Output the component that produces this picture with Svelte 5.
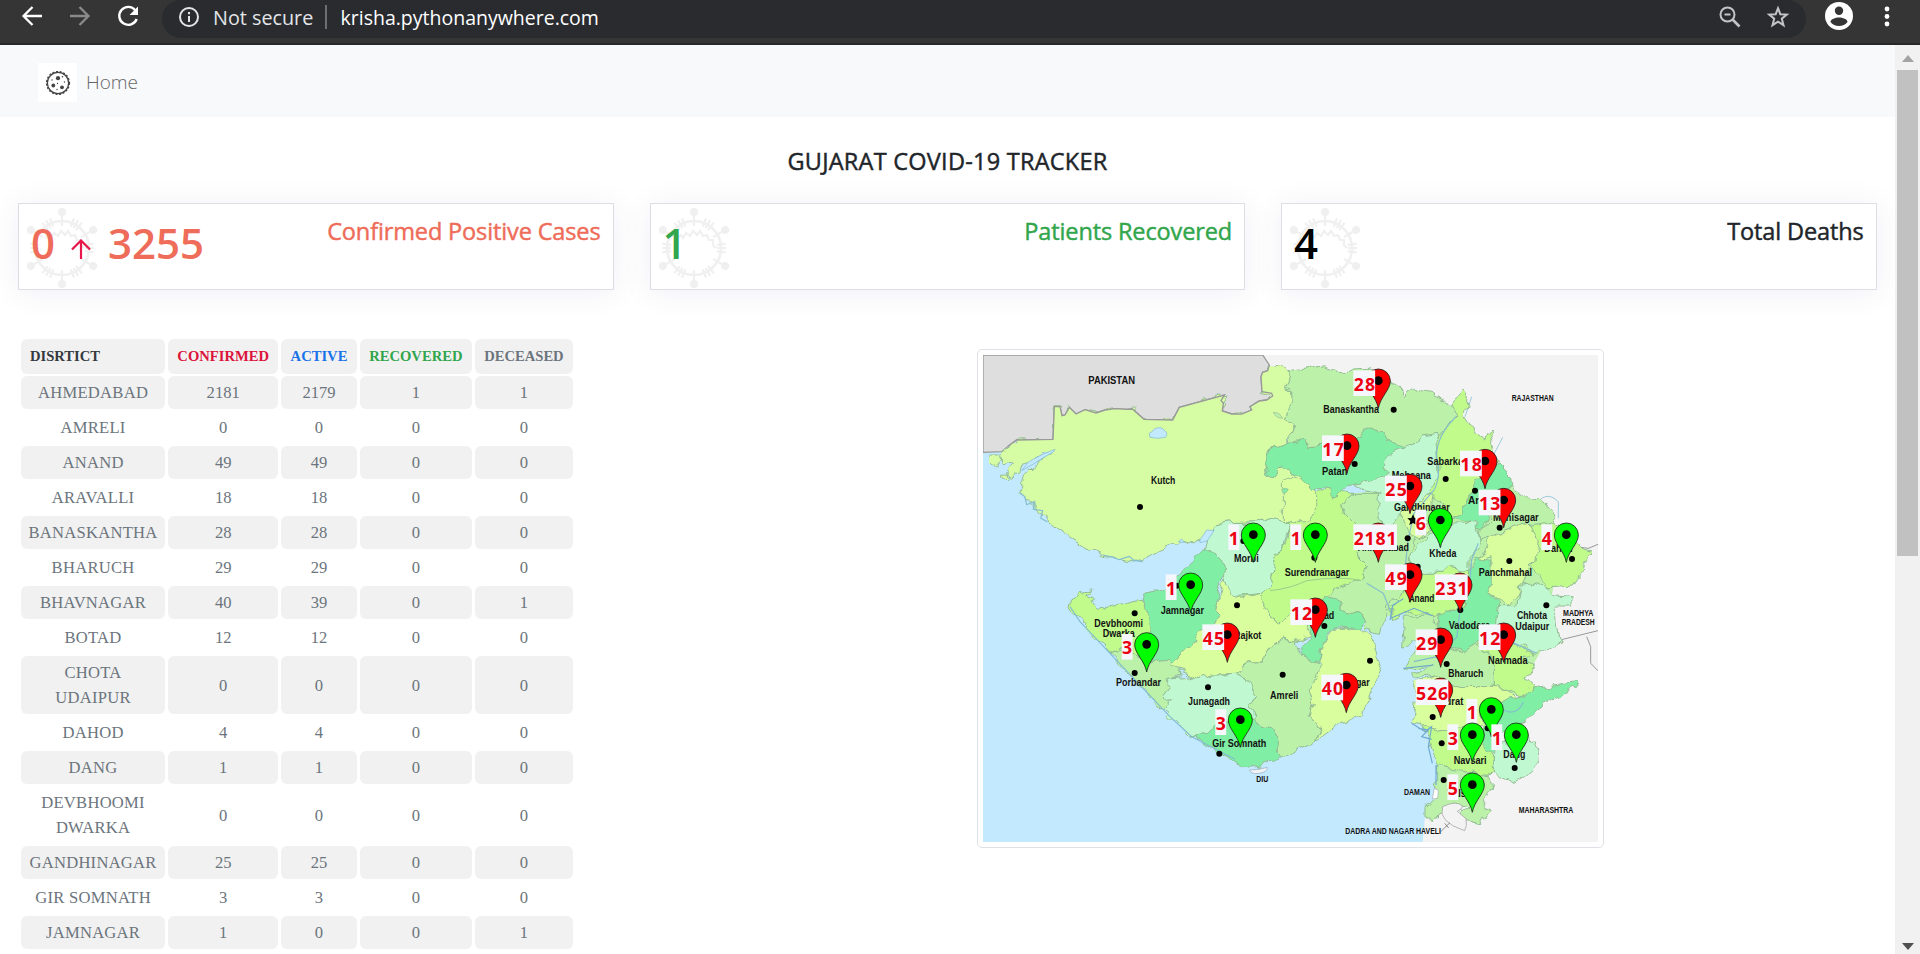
<script>
  const stats = [
    { tone: 'orange', value: '0', rise: '3255', label: 'Confirmed Positive Cases' },
    { tone: 'green', value: '1', label: 'Patients Recovered' },
    { tone: 'black', value: '4', label: 'Total Deaths' }
  ];

  const rows = [
    ['AHMEDABAD', 2181, 2179, 1, 1],
    ['AMRELI', 0, 0, 0, 0],
    ['ANAND', 49, 49, 0, 0],
    ['ARAVALLI', 18, 18, 0, 0],
    ['BANASKANTHA', 28, 28, 0, 0],
    ['BHARUCH', 29, 29, 0, 0],
    ['BHAVNAGAR', 40, 39, 0, 1],
    ['BOTAD', 12, 12, 0, 0],
    ['CHOTA UDAIPUR', 0, 0, 0, 0],
    ['DAHOD', 4, 4, 0, 0],
    ['DANG', 1, 1, 0, 0],
    ['DEVBHOOMI DWARKA', 0, 0, 0, 0],
    ['GANDHINAGAR', 25, 25, 0, 0],
    ['GIR SOMNATH', 3, 3, 0, 0],
    ['JAMNAGAR', 1, 0, 0, 1]
  ];

  // District fills and outlines, in map units (three per pixel).
  const lime = '#d6fda4', sage = '#bbf1a8', mint = '#c0f8d2', jade = '#80eea4', leaf = '#c0fb8c', lemon = '#d9fe9e';
  const districts = [
    [lime, '253,200 270,200 276,227 285,225 298,202 318,222 345,209 378,219 405,210 435,206 470,208 487,207 522,238 608,240 628,202 763,165 753,182 760,190 757,213 785,222 815,222 845,210 840,200 868,183 890,180 908,168 905,160 876,155 873,110 878,97 893,92 898,75 930,78 950,95 962,100 945,140 968,150 970,190 955,210 950,240 972,250 955,285 950,312 890,335 885,370 895,410 915,400 920,378 940,375 965,400 990,410 1030,440 1035,490 1030,520 990,548 955,545 905,535 870,545 780,548 740,555 730,570 715,590 690,605 640,605 600,615 545,640 515,665 490,660 450,655 400,645 360,630 310,600 250,560 215,530 195,505 165,475 150,460 155,440 165,400 200,370 255,330 215,340 180,365 155,370 150,395 130,415 115,415 115,400 130,375 100,370 95,350 110,325 140,300 249,298'],
    [lime, '60,345 90,345 95,360 75,380 58,372'],
    [lime, '88,400 110,398 110,412 90,415'],
    [sage, '1115,490 1150,460 1225,460 1240,520 1290,500 1340,560 1320,650 1330,700 1310,740 1290,780 1260,770 1255,810 1235,840 1225,880 1180,870 1190,850 1180,825 1110,815 1110,780 1060,770 1100,740 1180,700'],
    [mint, '730,570 740,555 780,548 870,545 905,535 955,545 960,560 945,600 940,635 905,645 910,680 905,710 900,740 870,760 820,765 790,775 770,740 762,700 755,665 705,620'],
    [jade, '705,620 755,665 762,705 745,750 740,770 735,810 750,825 740,845 690,880 655,915 620,960 600,980 595,955 550,970 540,940 535,900 545,860 530,810 520,760 580,750 600,735 640,700 670,670 680,645'],
    [leaf, '370,752 330,758 305,780 300,800 330,845 420,940 440,930 520,955 545,960 535,900 545,860 530,810 520,780 490,785 470,790 430,795 400,812 375,810 362,790 370,775 350,765'],
    [sage, '420,940 455,925 500,945 550,970 595,955 615,985 640,1005 590,1015 600,1035 580,1060 600,1085 590,1115 575,1110 500,1025 460,980'],
    [lemon, '620,960 655,915 690,880 740,845 750,825 735,810 745,770 765,720 775,750 800,775 870,760 890,800 920,850 960,820 1000,830 1020,890 985,900 940,895 885,935 880,965 820,975 800,1000 720,1003 670,1025 650,1000 600,980'],
    [mint, '590,1015 650,1010 670,1025 720,1003 800,1000 845,1040 860,1070 835,1095 850,1120 850,1140 735,1150 715,1180 665,1190 600,1130 575,1110 600,1085 580,1060 600,1035'],
    [jade, '665,1190 715,1180 735,1148 850,1140 905,1160 935,1245 915,1265 840,1285 790,1265 720,1225'],
    [sage, '820,975 880,965 885,935 940,895 985,900 995,950 1050,970 1040,1010 1015,1050 1030,1090 1020,1130 1050,1170 1035,1205 960,1240 935,1250 905,1160 850,1140 850,1120 835,1095 860,1070 845,1040 800,1000'],
    [leaf, '955,545 990,548 1030,520 1035,455 1080,450 1150,460 1115,490 1120,520 1170,570 1160,650 1190,680 1180,720 1110,740 1060,770 1030,840 960,820 920,850 890,800 870,760 900,740 910,680 905,645 940,635 960,560'],
    [jade, '1060,770 1110,780 1110,815 1180,825 1190,850 1160,865 1095,860 1070,890 1050,930 1035,970 1000,950 995,920 1020,890 1030,840'],
    [lemon, '1095,865 1160,865 1200,885 1220,940 1235,990 1210,1040 1185,1100 1180,1125 1110,1150 1035,1205 1050,1170 1020,1130 1030,1090 1015,1050 1040,1010 1050,970 1040,960 1055,920 1075,890'],
    [lemon, '960,408 1010,425 1040,445 1040,500 1015,540 985,548 940,540 940,420'],
    [sage, '962,97 1030,85 1060,80 1110,95 1135,88 1190,85 1225,90 1260,120 1290,140 1305,170 1330,148 1390,165 1440,190 1458,225 1410,290 1400,310 1395,282 1355,285 1345,305 1300,320 1250,300 1230,265 1195,265 1160,300 1090,310 1020,325 1010,300 960,315 955,285 972,250 950,240 955,210 970,190 968,150 945,140'],
    [jade, '950,312 1010,300 1020,325 1090,310 1160,300 1195,265 1230,265 1250,300 1300,320 1250,345 1240,370 1255,400 1200,420 1150,430 1110,455 1095,472 1080,450 1020,440 990,410 965,400 940,375 920,378 915,400 895,410 885,370 890,335'],
    [mint, '1300,320 1345,305 1355,285 1400,280 1410,300 1400,320 1405,400 1390,450 1360,480 1340,510 1290,520 1260,570 1225,540 1220,500 1230,460 1190,450 1150,430 1200,420 1255,400 1240,370 1250,345'],
    [leaf, '1410,290 1458,225 1445,190 1480,150 1495,170 1485,230 1520,285 1550,300 1560,270 1572,300 1565,330 1590,370 1560,380 1510,430 1480,520 1440,525 1420,500 1380,470 1405,400 1400,320'],
    [jade, '1510,430 1560,385 1590,375 1625,410 1628,440 1560,470 1570,510 1550,540 1530,572 1500,550 1445,530 1480,520'],
    [sage, '1628,440 1660,470 1700,480 1740,510 1760,545 1750,580 1680,560 1640,555 1560,590 1525,610 1530,572 1560,540 1570,510 1560,470'],
    [leaf, '1760,545 1800,570 1815,600 1830,625 1865,635 1840,690 1810,735 1740,740 1700,700 1680,670 1675,560'],
    [lemon, '1560,590 1640,555 1680,560 1705,600 1695,660 1675,680 1650,740 1640,770 1620,800 1560,760 1560,650 1530,660'],
    [lemon, '1290,520 1340,490 1390,460 1385,500 1360,530 1390,570 1340,600 1310,570'],
    [mint, '1320,640 1360,600 1410,560 1440,550 1520,555 1530,610 1500,660 1500,690 1440,680 1420,700 1360,700 1330,690'],
    [leaf, '1310,740 1330,700 1360,700 1420,700 1440,680 1500,690 1490,760 1475,800 1410,820 1390,830 1330,815 1260,840 1265,800 1290,780'],
    [jade, '1500,690 1520,655 1555,660 1560,700 1560,760 1585,785 1590,840 1560,880 1520,910 1490,930 1420,915 1420,890 1400,860 1410,820 1480,800 1490,750'],
    [mint, '1650,735 1700,730 1735,740 1750,770 1800,775 1800,795 1750,795 1760,830 1770,910 1700,940 1660,920 1600,900 1580,850 1585,800 1640,800'],
    [sage, '1300,835 1390,825 1400,860 1420,890 1420,915 1480,935 1520,910 1570,950 1570,1040 1460,1040 1390,1005 1330,1015 1325,1000 1390,980 1300,985 1335,930 1360,905 1295,915'],
    [leaf, '1520,920 1600,890 1660,930 1695,940 1665,950 1695,1000 1660,1010 1700,1050 1650,1070 1570,1040 1570,950'],
    [lemon, '1330,1030 1390,1005 1460,1040 1580,1040 1640,1075 1600,1100 1560,1150 1520,1160 1400,1170 1330,1150 1340,1080'],
    [jade, '1530,1100 1640,1075 1710,1040 1820,1025 1825,1040 1760,1070 1700,1110 1660,1150 1600,1170 1570,1240 1530,1240 1540,1150'],
    [leaf, '1350,1155 1400,1170 1520,1160 1550,1230 1570,1245 1570,1300 1520,1305 1460,1290 1400,1270 1380,1200'],
    [mint, '1575,1230 1610,1210 1680,1190 1700,1230 1705,1270 1660,1310 1630,1328 1570,1300'],
    [sage, '1400,1270 1460,1290 1560,1305 1565,1340 1540,1390 1555,1410 1520,1455 1470,1440 1475,1415 1500,1405 1460,1395 1410,1415 1390,1440 1365,1440 1365,1400 1400,1370 1400,1330']
  ];

  // text, left, baseline, width, size
  const labels = [
    ['PAKISTAN', 355, 131, 140, 34],
    ['Kutch', 543, 433, 73, 31],
    ['RAJASTHAN', 1625, 183, 126, 27],
    ['Banaskantha', 1060, 218, 167, 31],
    ['Patan', 1056, 404, 76, 31],
    ['Sabarkantha', 1372, 375, 165, 31],
    ['Mehsana', 1265, 417, 118, 31],
    ['Aravalli', 1494, 492, 110, 31],
    ['Gandhinagar', 1272, 513, 167, 31],
    ['Mahisagar', 1569, 542, 137, 31],
    ['Dahod', 1723, 635, 85, 31],
    ['Ahmedabad', 1163, 632, 154, 31],
    ['Kheda', 1378, 652, 81, 31],
    ['Morbi', 792, 667, 74, 31],
    ['Surendranagar', 944, 707, 194, 31],
    ['Panchmahal', 1526, 707, 160, 31],
    ['Anand', 1316, 785, 77, 31],
    ['Jamnagar', 572, 821, 130, 31],
    ['Devbhoomi', 373, 860, 146, 31],
    ['Dwarka', 398, 892, 96, 31],
    ['Rajkot', 792, 898, 82, 31],
    ['Botad', 1017, 836, 76, 31],
    ['Porbandar', 438, 1037, 135, 31],
    ['Junagadh', 654, 1096, 126, 31],
    ['Amreli', 900, 1076, 85, 31],
    ['Bhavnagar', 1062, 1037, 137, 31],
    ['Gir Somnath', 727, 1222, 162, 31],
    ['DIU', 859, 1326, 36, 27],
    ['Vadodara', 1436, 866, 124, 31],
    ['Chhota', 1641, 837, 90, 31],
    ['Udaipur', 1636, 871, 102, 31],
    ['MADHYA', 1779, 829, 91, 27],
    ['PRADESH', 1775, 854, 99, 27],
    ['Narmada', 1554, 971, 119, 31],
    ['Bharuch', 1435, 1010, 105, 31],
    ['Surat', 1408, 1096, 72, 31],
    ['Navsari', 1451, 1272, 99, 31],
    ['Dang', 1600, 1254, 66, 31],
    ['Valsad', 1432, 1370, 88, 31],
    ['DAMAN', 1302, 1364, 78, 27],
    ['MAHARASHTRA', 1646, 1418, 164, 27],
    ['DADRA AND NAGAR HAVELI', 1126, 1481, 287, 27]
  ];

  const towns = [[510, 501], [1271, 209], [1154, 372], [1427, 417], [1515, 452], [1589, 563], [1313, 595], [1618, 663], [1806, 657], [1343, 680], [820, 603], [1033, 653], [620, 737], [494, 820], [801, 796], [1063, 858], [494, 999], [714, 1042], [938, 1004], [748, 1241], [1200, 962], [1471, 810], [1729, 796], [1430, 972], [1388, 1131], [1553, 1165], [1415, 1210], [1634, 1284], [1421, 1320]];

  // value, centre x, top y, colour
  const R = '#fe0000', G = '#00fe00';
  const pins = [
    [28, 1225, 87, R], [17, 1131, 282, R], [18, 1545, 328, R], [25, 1320, 403, R], [13, 1601, 445, R],
    [6, 1411, 505, G], [1, 850, 549, G], [1, 1036, 549, G], [2181, 1225, 549, R], [4, 1789, 549, G],
    [49, 1320, 669, R], [231, 1470, 699, R], [1, 662, 699, G], [12, 1036, 774, R], [45, 772, 849, R],
    [3, 530, 878, G], [29, 1412, 864, R], [12, 1601, 849, R], [40, 1129, 1000, R], [526, 1412, 1014, R],
    [1, 1564, 1073, G], [3, 1507, 1149, G], [1, 1639, 1149, G], [5, 1507, 1299, G], [3, 811, 1104, G]
  ];

  const spikes = [0, 60, 120, 180, 240, 300];
  const bristles = [22, 30, 38, 82, 90, 98, 142, 150, 158, 202, 210, 218, 262, 270, 278, 322, 330, 338];
</script>

<div class="window">
  <header class="chrome">
    <div class="tools">
      <svg width="24" height="24" viewBox="0 0 24 24" fill="none" stroke="#fff" stroke-width="2.3"><path d="M22 12H4M12.5 3 3.5 12l9 9" /></svg>
      <svg width="24" height="24" viewBox="0 0 24 24" fill="none" stroke="#8a8a8a" stroke-width="2.3"><path d="M2 12h18M11.5 3l9 9-9 9" /></svg>
      <svg width="24" height="24" viewBox="0 0 24 24"><path d="M19.3 6.2A9 9 0 1 0 20.700 15" fill="none" stroke="#fff" stroke-width="2.400" /><path d="M22 2.500V11h-8.500z" fill="#fff" /></svg>
    </div>
    <div class="omnibox">
      <svg width="22" height="22" viewBox="0 0 22 22" fill="none" stroke="#e3e5e8" stroke-width="2"><circle cx="11" cy="11" r="9" /><path d="M11 10v6M11 6v2.200" /></svg>
      <span class="secure">Not secure</span>
      <span class="bar"></span>
      <span class="url">krisha.pythonanywhere.com</span>
      <svg class="lens" width="24" height="24" viewBox="0 0 24 24" fill="none" stroke="#c3c4c6" stroke-width="2"><circle cx="9.500" cy="9.500" r="7" /><path d="M6.500 9.500h6" /><path d="m14.500 14.500 7 7" stroke-width="2.700" /></svg>
      <svg width="24" height="24" viewBox="0 0 24 24" fill="none" stroke="#c3c4c6" stroke-width="2"><path d="m12 3.200 2.300 6 6.500.400-5 4.100 1.700 6.500-5.500-3.600-5.500 3.600 1.700-6.500-5-4.100 6.500-.400z" /></svg>
    </div>
    <svg class="avatar" width="28" height="28" viewBox="0 0 28 28"><circle cx="14" cy="14" r="14" fill="#fff" /><circle cx="14" cy="8.800" r="4.200" fill="#353535" /><path d="M5.500 20c0-3 5-4.500 8.500-4.500s8.500 1.500 8.500 4.500c-2 2.500-5 4-8.500 4s-6.500-1.500-8.500-4z" fill="#353535" /></svg>
    <svg class="dots" width="6" height="22" viewBox="0 0 6 22" fill="#fff"><circle cx="3" cy="3" r="2.400" /><circle cx="3" cy="10.500" r="2.400" /><circle cx="3" cy="18" r="2.400" /></svg>
  </header>

  <div class="body">
    <main>
      <nav>
        <span class="logo">
          <svg width="26" height="26" viewBox="0 0 26 26"><circle cx="13" cy="13" r="10.600" fill="none" stroke="#444" stroke-width="1.200" /><circle cx="13" cy="13" r="11.500" fill="none" stroke="#444" stroke-width="1.200" stroke-dasharray="2 1.700" /><g fill="#444"><circle cx="13" cy="8.200" r="2.100" /><circle cx="8.300" cy="15.500" r="1.900" /><circle cx="17" cy="17.300" r="1.900" /><circle cx="17.500" cy="6.700" r=".8" /><circle cx="19.500" cy="12" r=".7" /><circle cx="12.500" cy="13.500" r=".7" /><circle cx="12" cy="19.500" r=".7" /><circle cx="7" cy="10" r=".7" /></g></svg>
        </span>
        <a href="#home">Home</a>
      </nav>
      <h1>GUJARAT COVID-19 TRACKER</h1>

      <section class="stats">
        {#each stats as s}
          <div class="card {s.tone}">
            <svg class="virus" width="72" height="82" viewBox="-36 -41 72 82" fill="none" stroke="#f0f0f0" stroke-width="2.200">
              <circle r="27" stroke-width="2.600" />
              {#each spikes as a}
                <g transform="rotate({a})"><path d="M0-22v14" transform="translate(0 -14)" /><circle cy="-36" r="4" fill="#f0f0f0" stroke="none" /></g>
              {/each}
              {#each bristles as a}
                <path transform="rotate({a})" d="M0-23v-9" />
              {/each}
              <path d="M-17-10l4-3 2 3 3-5 4 3 3-5 4 4 3-4 3 5 4-1 2 5 4 0 0 5 3 3" />
            </svg>
            <div class="figure">
              <span>{s.value}</span>
              {#if s.rise}
                <svg width="20" height="20" viewBox="0 0 20 20" fill="none" stroke="#e8174b" stroke-width="2.200"><path d="M10 20V2M1 10.500l9-9 9 9" /></svg>
                <span>{s.rise}</span>
              {/if}
            </div>
            <h2>{s.label}</h2>
          </div>
        {/each}
      </section>

      <section class="content">
        <table>
          <colgroup><col class="c1" /><col class="c2" /><col class="c3" /><col class="c4" /><col class="c5" /></colgroup>
          <thead>
            <tr><th class="dark">DISRTICT</th><th class="red">CONFIRMED</th><th class="blue">ACTIVE</th><th class="grn">RECOVERED</th><th>DECEASED</th></tr>
          </thead>
          <tbody>
            {#each rows as r}
              <tr>{#each r as v}<td>{v}</td>{/each}</tr>
            {/each}
          </tbody>
        </table>

        <div class="map">
          <svg width="615" height="487" viewBox="39 45 1845 1461">
            <defs>
              <filter id="rough" x="0" y="0" width="100%" height="100%">
                <feTurbulence type="fractalNoise" baseFrequency="0.028" numOctaves="2" seed="4" result="n" />
                <feDisplacementMap in="SourceGraphic" in2="n" scale="34" xChannelSelector="R" yChannelSelector="G" />
              </filter>
            </defs>
            <rect x="39" y="45" width="1845" height="1461" fill="#c3e9fe" />
            <polygon points="870,45 1884,45 1884,1506 1358,1506 1365,1430 1420,1350 1420,900 1200,400 900,200" fill="#f3f3f3" />
            <polygon class="edge" points="39,45 878,45 898,75 893,92 878,97 873,110 876,155 905,160 908,168 890,180 868,183 840,200 845,210 815,222 785,222 757,213 760,190 753,182 763,165 628,202 608,240 522,238 487,207 470,208 435,206 405,210 378,219 345,209 318,222 298,202 285,225 276,227 270,200 253,200 249,298 140,300 115,318 95,335 39,337" fill="#dedede" />
            <g fill="none" stroke="#9ccbdd" stroke-width="3">
              <path d="M1485 230 1505 170M1560 365 1598 292M1690 505q35-60 75-20v50" />
              <path d="M1770 900 1884 872M1850 890l12 30v50l22 22" stroke="#999" />
              <path d="M1815 620l40 5 29-12" stroke="#999" />
            </g>
            <polygon points="1150,460 1600,420 1800,600 1750,740 1720,920 1640,1060 1430,1200 1400,1000 1440,880 1300,820 1060,860 980,900 760,1000 600,960 780,760 1000,560" fill={sage} />
            <g filter="url(#rough)" class="areas">
              {#each districts as d}
                <polygon points={d[1]} fill={d[0]} />
              {/each}
            </g>
            <polygon points="140,300 249,298 253,200 270,200 276,227 285,225 298,202 318,222 345,209 378,219 405,210 435,206 470,208 487,207 522,238 608,240 628,202 763,165 753,182 760,190 757,213 785,222 815,222 845,210 840,200 868,183 890,180 908,168 905,160 876,155 873,110 878,97 893,92 898,77 925,83 938,105 925,150 935,200 930,280 860,330 500,400 270,345 200,330 150,325" fill={lime} />
            <polyline points="898,75 893,92 878,97 873,110 876,155 905,160 908,168 890,180 868,183 840,200 845,210 815,222 785,222 757,213 760,190 753,182 763,165 628,202 608,240 522,238 487,207 470,208 435,206 405,210 378,219 345,209 318,222 298,202 285,225 276,227 270,200 253,200 249,298 140,300 115,318" fill="none" stroke="#999" stroke-width="4" />
            <g fill="#c3e9fe" stroke="#7fb7cf" stroke-width="2">
              <path d="M538 280q12-6 14-12 20-12 32 4 12 8 2 20-22 6-46 0z" />
              <path d="M155 392 175 366 215 344 255 328 250 336 218 354 190 372z" />
              <path d="M690 600l20-30 22 2-20 30-22 6zM625 605l10-8 8 10z" />
            </g>
            <path d="M935 448q12-6 20 0-4 12-16 12z" fill={jade} stroke="#9b9" stroke-width="2" />
            <path d="M910 217q20 0 28 18-20 0-28-18z" fill={sage} stroke="#9b9" stroke-width="2" />
            <g fill="none" stroke="#83bdd0" stroke-width="3.500">
              <path d="M1458 230q-60 60-58 120 14 60-8 100l-60 70-18 80-8 80M1525 610l-20 50-8 90-26 50-10 90-60 60-70 15M1190 730l50 30 20 50M1600 1110q40 20 60-24M1700 940l-110-50" />
              <path d="M900 752q60-6 110-30 90-14 160-2" stroke="#97cf8e" stroke-width="3" />
              <path d="M1260 840l8-44 32-20M1262 835l70-30 55 22M1300 985l90-10M1325 1150l40 25 20-15-10 60 12 50M1345 1165l30 5-20 20 30 8M1398 1275v60" stroke="#6ea9cf" />
              <path d="M150 458l14 12 6 24 24-10-4 24 28 4-6 22 20 12M398 645l30 6 20 8 30-10 14 12 26 4" />
              <path d="M300 800l30 45 90 95 80 85 100 105 65 60 70 36 60 32" />
            </g>
            <path d="M1418 1400q40-20 60-2-2 10-16 16 14 12 26 22 4 22-4 36l-34-14-22-16-12-20z" fill="#f3f3f3" stroke="#999" stroke-width="2" />
            <path d="M1393 1345l12 6-2 24-16 2z" fill="#fff" stroke="#aaa" stroke-width="2" />
            <path d="M838 1290q30 0 54-8 0 16-26 18-22 4-28-10z" fill="#f3f3f3" stroke="#a9c0d8" stroke-width="3" />
            <path d="M1412 1475 1440 1448M1424 1450l12 14" stroke="#777" stroke-width="2.500" />

            {#each towns as t}<circle cx={t[0]} cy={t[1]} r="9" />{/each}
            <path d="M1329 523l5 11 12 1-9 8 3 12-11-6-11 6 3-12-9-8 12-1z" />
            <g class="labels">
              {#each labels as l}
                <text x={l[1]} y={l[2]} font-size={l[4]} textLength={l[3]} lengthAdjust="spacingAndGlyphs">{l[0]}</text>
              {/each}
            </g>
            {#each pins as p}
              <g transform="translate({p[1]} {p[2]})">
                <path d="M0 118C-6 84-36 62-36 36A36 36 0 0 1 36 36C36 62 6 84 0 118z" fill={p[3]} stroke="#222" stroke-width="2.500" />
                <circle cy="35" r="13" fill="#000" />
                <rect x="-75" y="4" width={32.7 * String(p[0]).length} height="77" fill="#f5f7fc" />
                <text class="count" x="-74" y="65" textLength={32.2 * String(p[0]).length}>{p[0]}</text>
              </g>
            {/each}
          </svg>
        </div>
      </section>
    </main>
    <aside class="scroll">
      <svg width="12" height="7" viewBox="0 0 12 7"><path d="M6 0l6 7H0z" fill="#a3a3a3" /></svg>
      <div class="thumb"></div>
      <svg class="down" width="12" height="7" viewBox="0 0 12 7"><path d="M6 7 12 0H0z" fill="#505050" /></svg>
    </aside>
  </div>
</div>

<style>
  :global(body) { margin: 0; background: #fff; }
  .window { height: 954px; overflow: hidden; display: flex; flex-direction: column; font-family: 'Open Sans', 'Noto Sans', sans-serif; }
  svg { display: block; flex: none; }

  .chrome { flex: none; height: 45px; box-sizing: border-box; background: #353535; border-bottom: 2px solid #282828; display: flex; align-items: flex-start; }
  .tools { display: flex; gap: 24px; padding: 4px 0 0 20px; width: 142px; }
  .omnibox { width: 1644px; height: 38px; box-sizing: border-box; background: #292b2f; display: flex; align-items: center; padding: 0 16px 4px; border-radius: 19px; }
  .secure { margin-left: 13px; width: 104px; color: #e3e5e8; font-size: 19.800px; white-space: nowrap; }
  .bar { margin-left: 8px; width: 1.500px; height: 24px; background: #6c6e71; }
  .url { margin-left: 14px; color: #fff; font-size: 19.5px; white-space: nowrap; }
  .lens { margin-left: auto; margin-right: 24px; }
  .avatar { margin: 2px 0 0 19px; }
  .dots { margin: 6px 0 0 31px; }

  .body { flex: 1; min-height: 0; display: flex; }
  main { width: 1895px; height: 909px; overflow: hidden; }
  nav { height: 72px; background: #f8f9fb; display: flex; align-items: center; padding: 3px 0 0 38px; box-sizing: border-box; }
  .logo { width: 39px; height: 39px; background: #fff; display: flex; align-items: center; justify-content: center; }
  nav a { margin-left: 9px; margin-top: -2px; font-size: 19px; font-weight: 300; color: #666; text-decoration: none; }
  h1 { margin: 27px 0 0; height: 59px; line-height: 34px; font-size: 23.5px; font-weight: 400; letter-spacing: 0.250px; color: #212529; text-align: center; -webkit-text-stroke: 0.450px; }

  .stats { display: flex; gap: 36px; padding-left: 18px; }
  .card { width: 595.500px; height: 87px; box-sizing: border-box; flex: none; border: 1px solid #dcdfe3; box-shadow: 0 3px 28px rgba(60, 60, 130, 0.08); background: #fff; position: relative; display: flex; justify-content: space-between; }
  .virus { position: absolute; left: 7px; top: 3px; }
  .figure { position: relative; display: flex; align-items: center; height: 77px; margin-left: 12px; font-size: 42px; font-weight: 600; }
  .figure svg { margin: 12px 17px 0 16px; }
  h2 { margin: 10px 12px 0 0; line-height: 34px; font-size: 23.500px; font-weight: 400; letter-spacing: -0.130px; white-space: nowrap; -webkit-text-stroke: 0.450px; }
  .orange { color: #ee6c59; }
  .green { color: #31a64c; }
  .black { color: #212529; }
  .black .figure { color: #000; }

  .content { display: flex; align-items: flex-start; }
  table { margin: 47px 0 0 18px; width: 558px; table-layout: fixed; border-collapse: separate; border-spacing: 3.200px 2px; font-family: 'Liberation Serif', serif; color: #6c757d; text-align: center; }
  .c1 { width: 144px; } .c2 { width: 110px; } .c3 { width: 75.500px; } .c4 { width: 112px; } .c5 { width: 98px; }
  th { background: #f1f1f1; border-radius: 6px; height: 35px; padding: 0; font-size: 14.600px; }
  .dark { color: #343a40; text-align: left; padding-left: 9px; }
  .red { color: #dc143c; } .blue { color: #1a73e8; } .grn { color: #31a64c; }
  td { padding: 4px 5px; line-height: 25px; font-size: 16.600px; border-radius: 6px; }
  td:first-child { letter-spacing: 0.250px; }
  tbody tr:nth-child(odd) td { background: #f1f1f1; }

  .map { margin: 59px 0 0 401px; padding: 5px; border: 1px solid #dee2e6; border-radius: 5px; background: #fff; }
  .edge { stroke: #999; stroke-width: 4; }
  .areas polygon { stroke: #93bc94; stroke-width: 3; stroke-linejoin: round; }
  .labels text { font-family: 'Liberation Sans', sans-serif; font-weight: 700; fill: #111; }
  .count { font-family: 'Open Sans', sans-serif; font-weight: 700; font-size: 53px; fill: #ec0012; }

  .scroll { width: 25px; background: #f1f1f1; display: flex; flex-direction: column; align-items: center; padding: 10px 0 4px; box-sizing: border-box; }
  .thumb { margin-top: 8px; width: 21px; height: 486px; background: #c1c1c1; }
  .down { margin-top: auto; }
</style>
